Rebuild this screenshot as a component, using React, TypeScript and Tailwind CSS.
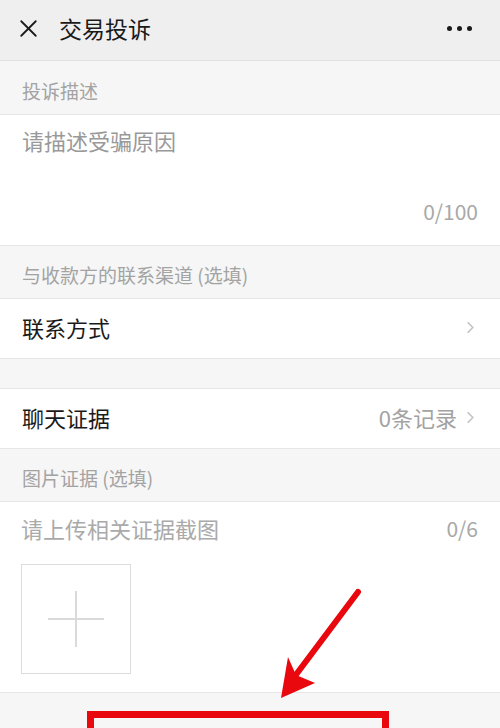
import { X, ChevronRight } from "lucide-react";

const font = { fontFamily: '"Noto Sans CJK SC", "Noto Sans", sans-serif' };

function Band({ label, h }: { label?: string; h: string }) {
  return (
    <div className={`${h} flex items-center px-[22px] pt-[7px] bg-[#f6f6f6] border-b border-[#e6e6e6]`}>
      {label && <span className="text-[19px] text-[#a3a3a3]">{label}</span>}
    </div>
  );
}

function Row({ title, value }: { title: string; value?: string }) {
  return (
    <div className="h-[60px] flex items-center justify-between pl-[22px] pr-[20px] pb-[3px] bg-white border-b border-[#e6e6e6]">
      <span className="text-[22px] text-[#1a1a1a]">{title}</span>
      <div className="flex items-center gap-1">
        {value && <span className="text-[22px] text-[#a3a3a3]">{value}</span>}
        <ChevronRight size={19} strokeWidth={2.2} color="#c4c4c4" />
      </div>
    </div>
  );
}

export default function App() {
  return (
    <div className="relative w-[500px] h-[728px] overflow-hidden bg-[#f6f6f6]" style={font}>
      <div className="h-[61px] flex items-center justify-between pl-[14px] pr-[28px] pb-[4px] bg-[#efefef] border-b border-[#e2e2e2]">
        <div className="flex items-center gap-[16px]">
          <X size={29} strokeWidth={1.5} color="#1a1a1a" />
          <span className="text-[23px] text-[#1a1a1a]">交易投诉</span>
        </div>
        <div className="flex gap-[5px]">
          <span className="w-[5px] h-[5px] rounded-full bg-[#1a1a1a]" />
          <span className="w-[5px] h-[5px] rounded-full bg-[#1a1a1a]" />
          <span className="w-[5px] h-[5px] rounded-full bg-[#1a1a1a]" />
        </div>
      </div>

      <Band label="投诉描述" h="h-[54px]" />

      <div className="h-[131px] flex flex-col justify-between bg-white border-b border-[#e6e6e6] pl-[22px] pr-[22px] pt-[9px] pb-[18px]">
        <span className="text-[22px] text-[#999999]">请描述受骗原因</span>
        <span className="self-end text-[21px] text-[#a8a8a8]">0/100</span>
      </div>

      <Band label="与收款方的联系渠道 (选填)" h="h-[53px]" />
      <Row title="联系方式" />
      <Band h="h-[30px]" />
      <Row title="聊天证据" value="0条记录" />
      <Band label="图片证据 (选填)" h="h-[53px]" />

      <div className="h-[191px] bg-white border-b border-[#e6e6e6] pl-[21px] pr-[22px] pt-[10px]">
        <div className="flex items-center justify-between">
          <span className="text-[22px] text-[#aaaaaa]">请上传相关证据截图</span>
          <span className="text-[21px] text-[#a8a8a8]">0/6</span>
        </div>
        <div className="mt-[19px] w-[110px] h-[110px] border border-[#dcdcdc] flex items-center justify-center">
          <svg width="56" height="56" viewBox="0 0 56 56">
            <path d="M28 0v56M0 28h56" stroke="#dadada" strokeWidth="2" />
          </svg>
        </div>
      </div>

      {/* annotations */}
      <div className="absolute left-[87px] top-[711px] w-[302px] h-[40px] border-[7px] border-[#e8080d]" />
      <svg className="absolute left-[270px] top-[580px]" width="100" height="125" viewBox="0 0 100 125">
        <path d="M88 12 L22 100" stroke="#e8080d" strokeWidth="6" strokeLinecap="round" />
        <path d="M11 118 L18 77 L26 95 L45 103 Z" fill="#e8080d" />
      </svg>
    </div>
  );
}
